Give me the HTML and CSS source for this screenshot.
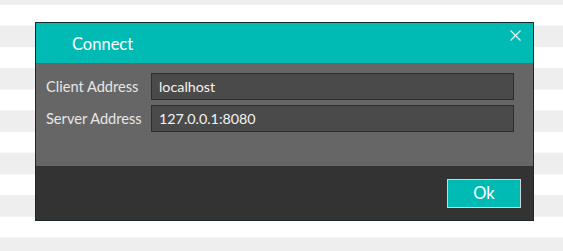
FILE: index.html
```html
<!DOCTYPE html>
<html lang="en">
<head>
    <meta charset="UTF-8">
    <title>Connect</title>
    <link rel="stylesheet" href="styles.css">
</head>
<body>

<!-- Connect dialog -->
<div class="dialog">
    <div class="dialog-header">
        <span class="dialog-title">Connect</span>
        <span class="close">
            <svg width="11" height="11" viewBox="0 0 11 11">
                <path d="M0.5 0.5 L10.5 10.5 M10.5 0.5 L0.5 10.5" stroke="#e8f8f7" stroke-width="1.2" fill="none"/>
            </svg>
        </span>
    </div>

    <div class="dialog-body">
        <label for="client">Client Address</label>
        <input type="text" id="client" value="localhost">
        <label for="server">Server Address</label>
        <input type="text" id="server" value="127.0.0.1:8080">
    </div>

    <div class="dialog-footer">
        <button class="button">Ok</button>
    </div>
</div>

</body>
</html>
```

FILE: styles.css
```css
html {
    background-color: #ffffff;
    background-image: linear-gradient(#ffffff 50%, #eeeeee 50%);
    background-size: 100% 42.4px;
    background-position: 0 4.8px;
}

body {
    font-family: Lato, 'Open Sans', sans-serif;
    margin: 0;
    padding: 22px 0 0 35px;
}

.dialog {
    width: 499px;
    box-sizing: border-box;
    border: 1px solid #17292a;
    display: flex;
    flex-direction: column;
}

.dialog-header {
    height: 40px;
    background-color: #00bbb4;
    display: flex;
    align-items: center;
    justify-content: space-between;
    padding: 0 12px 0 36px;
}

.dialog-title {
    color: #ffffff;
    font-size: 16.5px;
    margin-top: 2px;
}

.close {
    display: flex;
    align-self: flex-start;
    margin-top: 7px;
}

.dialog-body {
    height: 103px;
    box-sizing: border-box;
    background-color: #666666;
    padding: 10px 19px 0 10px;
    display: grid;
    grid-template-columns: 105px 1fr;
    grid-auto-rows: 27px;
    row-gap: 5px;
    align-items: center;
}

.dialog-body label {
    color: #e6e6e6;
    font-size: 14.6px;
}

.dialog-body input {
    height: 27px;
    box-sizing: border-box;
    background-color: #4a4a4a;
    border: 1px solid #2e2e2e;
    color: #f2f2f2;
    font-family: Lato, sans-serif;
    font-size: 14.3px;
    padding: 0 7px;
    outline: none;
}

.dialog-footer {
    height: 54px;
    background-color: #333333;
    display: flex;
    align-items: center;
    justify-content: flex-end;
    padding-right: 12px;
}

.button {
    width: 74px;
    height: 29px;
    background-color: #00bbb4;
    border: 1px solid #c8d8d6;
    color: #ffffff;
    font-family: Lato, sans-serif;
    font-size: 16.5px;
    padding: 0;
    cursor: pointer;
}
```
